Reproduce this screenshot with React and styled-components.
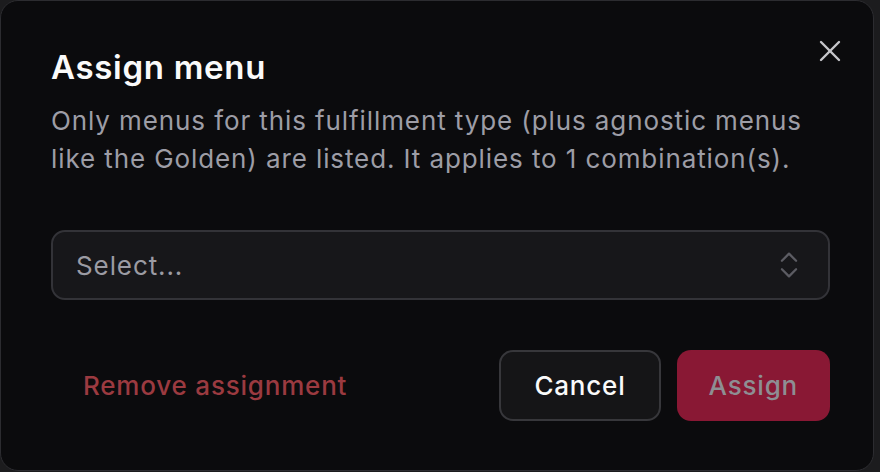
import React from "react";
import styled, { createGlobalStyle } from "styled-components";
import { X, ChevronsUpDown } from "lucide-react";

const GlobalStyle = createGlobalStyle`
  body {
    margin: 0;
    background: #1c1c1e;
    font-family: Inter, "Noto Sans", sans-serif;
  }
`;

const Dialog = styled.div`
  position: relative;
  box-sizing: border-box;
  width: 874px;
  height: 471px;
  padding: 46px 43px 48px 50px;
  background: #0b0b0d;
  border: 1px solid #2c2c30;
  border-radius: 18px;
  display: flex;
  flex-direction: column;
`;

const CloseButton = styled.button`
  position: absolute;
  top: 32px;
  right: 25px;
  width: 36px;
  height: 36px;
  padding: 0;
  border: none;
  background: transparent;
  color: #c6c6cb;
  display: flex;
  align-items: center;
  justify-content: center;
  cursor: pointer;
`;

const Title = styled.h2`
  margin: 0;
  font-size: 33px;
  line-height: 40px;
  font-weight: 600;
  color: #fafafa;
  letter-spacing: 0.7px;
`;

const Description = styled.p`
  margin: 15px 0 0;
  font-size: 26px;
  line-height: 38px;
  letter-spacing: 0.9px;
  color: #9d9da6;
`;

const SelectBox = styled.button`
  margin-top: 52px;
  box-sizing: border-box;
  height: 70px;
  width: 100%;
  padding: 0 22px 0 23px;
  display: flex;
  align-items: center;
  justify-content: space-between;
  background: #17171a;
  border: 2px solid #333338;
  border-radius: 14px;
  font-family: inherit;
  font-size: 26px;
  letter-spacing: 0.9px;
  color: #9b9ba3;
  cursor: pointer;
`;

const Footer = styled.div`
  margin-top: 50px;
  display: flex;
  align-items: center;
  justify-content: space-between;
`;

const Actions = styled.div`
  display: flex;
  gap: 16px;
`;

const Button = styled.button`
  box-sizing: border-box;
  height: 71px;
  padding: 0 ${(p) => p.$px || 30}px;
  border-radius: 14px;
  font-family: inherit;
  font-size: 26px;
  font-weight: 500;
  letter-spacing: 0.8px;
  cursor: pointer;
  border: 2px solid transparent;
  ${(p) =>
    p.$variant === "ghost" &&
    `
    background: transparent;
    color: #9b3a40;
  `}
  ${(p) =>
    p.$variant === "outline" &&
    `
    background: #151517;
    border-color: #37373b;
    color: #fafafa;
  `}
  ${(p) =>
    p.$variant === "primary" &&
    `
    background: #891834;
    color: #8e8e93;
    cursor: not-allowed;
  `}
`;

export default function App() {
  return (
    <>
      <GlobalStyle />
      <Dialog>
        <CloseButton aria-label="Close">
          <X size={36} strokeWidth={1.6} />
        </CloseButton>
        <Title>Assign menu</Title>
        <Description>
          Only menus for this fulfillment type (plus agnostic menus like the
          Golden) are listed. It applies to 1 combination(s).
        </Description>
        <SelectBox>
          <span>Select...</span>
          <ChevronsUpDown size={34} strokeWidth={1.6} color="#5c5c63" />
        </SelectBox>
        <Footer>
          <Button $variant="ghost">Remove assignment</Button>
          <Actions>
            <Button $variant="outline" $px={33}>Cancel</Button>
            <Button $variant="primary" $px={30} disabled>Assign</Button>
          </Actions>
        </Footer>
      </Dialog>
    </>
  );
}
